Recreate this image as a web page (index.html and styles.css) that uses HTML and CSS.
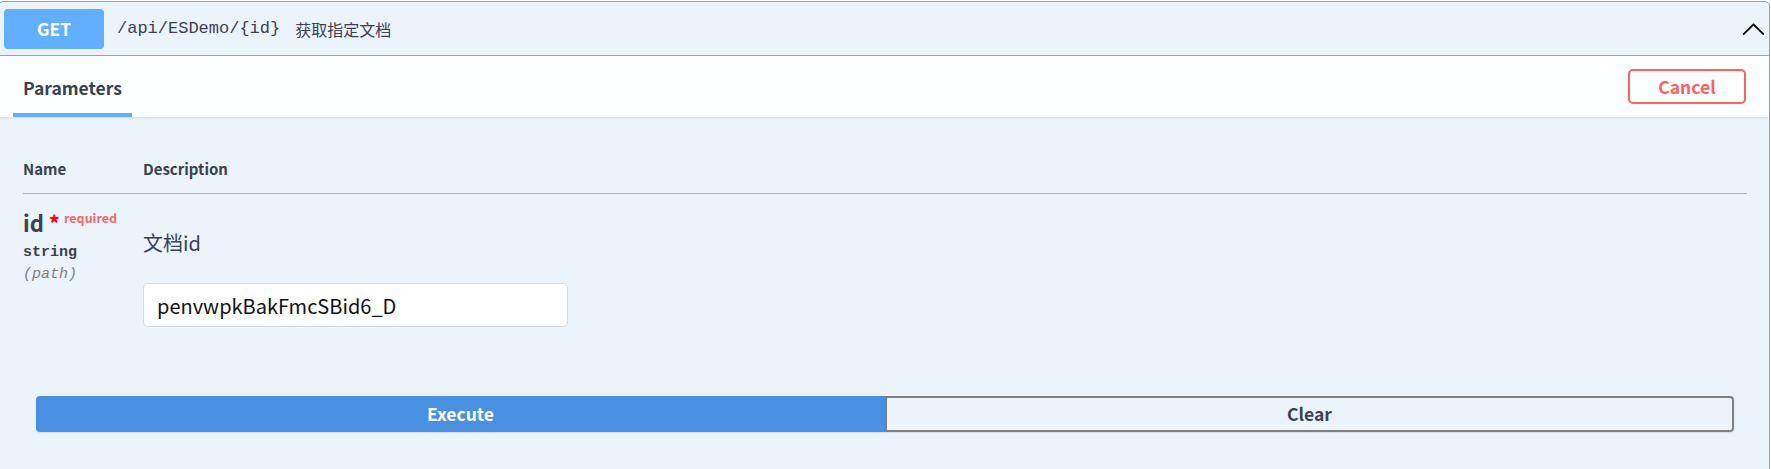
FILE: index.html
```html
<!DOCTYPE html>
<html lang="zh">
<head>
<meta charset="utf-8">
<title>GET /api/ESDemo/{id}</title>
<link rel="stylesheet" href="styles.css">
</head>
<body>
<div class="opblock">
  <div class="summary">
    <span class="method">GET</span>
    <span class="path">/api/ESDemo/{id}</span>
    <span class="summary-desc">获取指定文档</span>
    <svg class="arrow" width="25" height="25" viewBox="0 0 20 20" aria-hidden="true">
      <path d="M17.418 14.908c.272.268.709.268.979 0s.271-.701 0-.969l-7.908-7.83c-.27-.268-.707-.268-.979 0l-7.908 7.83c-.27.268-.27.701 0 .969.271.268.709.268.979 0L10 7.717l7.418 7.191z"/>
    </svg>
  </div>
  <div class="section-header">
    <div class="tab"><span>Parameters</span></div>
    <button class="btn-cancel">Cancel</button>
  </div>
  <div class="table-container">
    <div class="thead">
      <div class="col-name">Name</div>
      <div class="col-desc">Description</div>
    </div>
    <div class="row">
      <div class="col-name">
        <div class="param-name">id<span class="star">&nbsp;*</span><span class="req">required</span></div>
        <div class="param-type">string</div>
        <div class="param-in">(path)</div>
      </div>
      <div class="col-desc">
        <p class="desc-text">文档id</p>
        <input class="param-input" type="text" value="penvwpkBakFmcSBid6_D">
      </div>
    </div>
  </div>
  <div class="btn-group">
    <button class="btn execute">Execute</button>
    <button class="btn clear">Clear</button>
  </div>
</div>
</body>
</html>
```

FILE: styles.css
```css
* { box-sizing: border-box; }

html, body {
  margin: 0;
  background: #fff;
}

body {
  font-family: "Noto Sans CJK SC", "Noto Sans", sans-serif;
  color: #3b4151;
  overflow: hidden;
}

.opblock {
  margin: 1px 1px 0 -2px;
  border: 1px solid #61affe;
  border-radius: 5px;
  background: #ebf3fb;
}

/* summary bar */
.summary {
  display: flex;
  align-items: center;
  height: 54px;
  padding: 0 3px 0 5px;
  border-bottom: 1px solid #61affe;
}

.method {
  width: 100px;
  height: 40px;
  border-radius: 4px;
  background: #61affe;
  color: #fff;
  font-weight: 700;
  font-size: 17.5px;
  display: flex;
  align-items: center;
  justify-content: center;
}

.path {
  margin-left: 13px;
  font-family: "Liberation Mono", monospace;
  font-size: 17px;
  color: #3b4151;
}

.summary-desc {
  margin-left: 15px;
  font-size: 16px;
  color: #3b4151;
}

.arrow {
  margin-left: auto;
  fill: #000;
}

/* section header */
.section-header {
  position: relative;
  z-index: 1;
  display: flex;
  align-items: center;
  justify-content: space-between;
  height: 61px;
  padding: 0 23px 0 14px;
  background: rgba(255, 255, 255, 0.85);
  box-shadow: 0 1px 2px rgba(0, 0, 0, 0.1);
}

.tab {
  align-self: stretch;
  display: flex;
  align-items: flex-end;
  padding: 0 10px 14px;
  border-bottom: 4px solid #61affe;
  font-size: 17.5px;
  font-weight: 700;
  line-height: 22px;
}

.btn-cancel {
  width: 118px;
  height: 35px;
  border: 2px solid #ff6060;
  border-radius: 5px;
  background: transparent;
  color: #ff6060;
  font-family: "Noto Sans CJK SC", "Noto Sans", sans-serif;
  font-size: 17.5px;
  font-weight: 700;
  line-height: 1;
  padding: 0;
}

/* parameters table */
.table-container {
  padding: 25px 22px 25px 24px;
}

.thead {
  display: flex;
  padding: 16px 0 14px;
  border-bottom: 1px solid rgba(59, 65, 81, 0.35);
  font-size: 15px;
  font-weight: 700;
  line-height: 21px;
}

.col-name {
  flex: none;
  width: 120px;
}

.col-desc {
  flex: 1;
}

.row {
  display: flex;
  padding-bottom: 12px;
}

.row .col-name {
  padding-top: 16px;
}

.param-name {
  font-size: 22px;
  font-weight: 700;
  line-height: 24px;
  white-space: nowrap;
}

.star {
  color: #f00;
}

.req {
  position: relative;
  top: -9px;
  padding-left: 4px;
  font-size: 12.5px;
  font-weight: 700;
  color: rgba(255, 0, 0, 0.6);
}

.param-type {
  padding-top: 5px;
  font-family: "Liberation Mono", monospace;
  font-size: 15px;
  font-weight: 700;
  line-height: 18px;
}

.param-in {
  margin-top: 4px;
  font-family: "Liberation Mono", monospace;
  font-size: 15px;
  font-style: italic;
  line-height: 18px;
  color: #808080;
}

.desc-text {
  margin: 36px 0 0;
  font-size: 20px;
  line-height: 25px;
}

.param-input {
  display: block;
  margin-top: 28px;
  width: 425px;
  height: 44px;
  padding: 0 13px;
  border: 1px solid #d9d9d9;
  border-radius: 5px;
  background: #fff;
  color: #111;
  font-family: "Noto Sans CJK SC", "Noto Sans", sans-serif;
  font-size: 20px;
  outline: none;
}

/* execute / clear */
.btn-group {
  display: flex;
  padding: 32px 35px 48px 37px;
}

.btn {
  flex: 1;
  height: 36px;
  padding: 0;
  font-family: "Noto Sans CJK SC", "Noto Sans", sans-serif;
  font-size: 17.5px;
  font-weight: 700;
  line-height: 1;
  box-shadow: 0 1px 2px rgba(0, 0, 0, 0.1);
}

.execute {
  background: #4990e2;
  border: 2px solid #4990e2;
  border-radius: 4px 0 0 4px;
  color: #fff;
}

.clear {
  background: transparent;
  border: 2px solid #808080;
  border-radius: 0 4px 4px 0;
  color: #3b4151;
}
```
